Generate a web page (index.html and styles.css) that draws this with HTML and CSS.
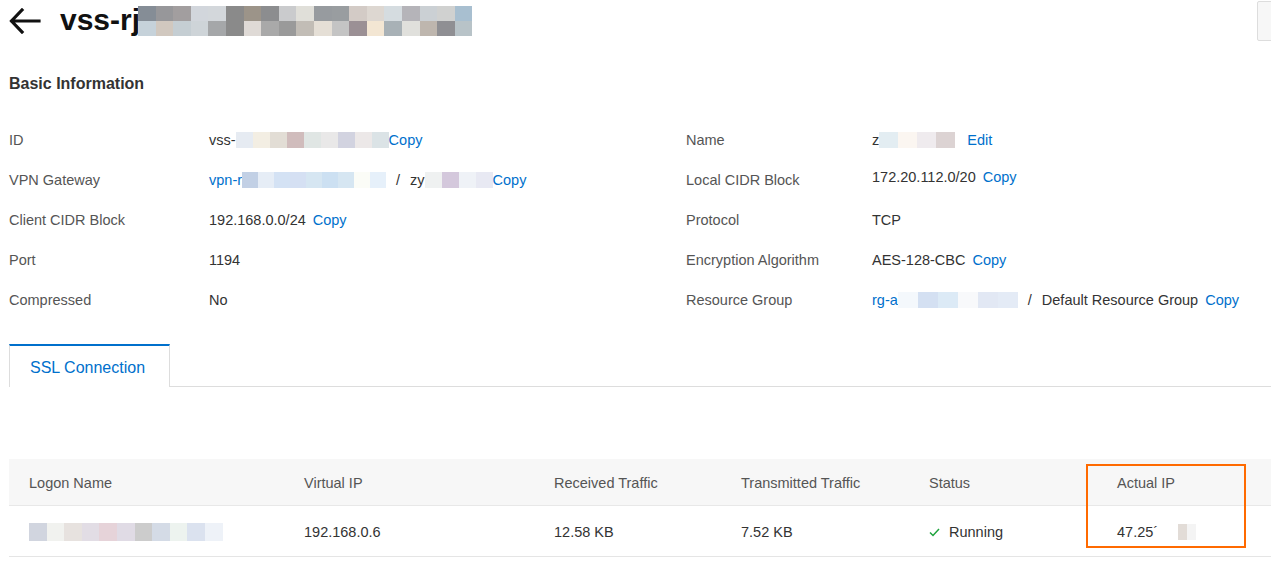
FILE: index.html
```html
<!DOCTYPE html>
<html>
<head>
<meta charset="utf-8">
<link rel="stylesheet" href="styles.css">
</head>
<body>
<div class="page">
  <header class="top">
    <svg class="back" width="32" height="26" viewBox="0 0 32 26"><path d="M30 13H3M13 2L2.5 13 13 24" fill="none" stroke="#111" stroke-width="3.2" stroke-linecap="square"/></svg>
    <h1 class="title">vss-rj</h1>
    <div class="pix2">
      <div class="prow">
        <i style="background:#858d96"></i><i style="background:#97979a"></i><i style="background:#a29e9f"></i><i style="background:#d2d6dc"></i><i style="background:#d3d7db"></i><i style="background:#8a8a8a"></i><i style="background:#9c9489"></i><i style="background:#8c8d8f"></i><i style="background:#cacbcd"></i><i style="background:#e0dfd9"></i><i style="background:#979b9f"></i><i style="background:#999da0"></i><i style="background:#d3cbc6"></i><i style="background:#ddd7d1"></i><i style="background:#d5dce0"></i><i style="background:#b5b4b9"></i><i style="background:#cbd0d4"></i><i style="background:#d0d1d0"></i><i style="background:#a8bfd0"></i>
      </div>
      <div class="prow">
        <i style="background:#c6d2da"></i><i style="background:#d1c8bf"></i><i style="background:#c5ced3"></i><i style="background:#ced4d8"></i><i style="background:#a5a7a9"></i><i style="background:#8a8a8a"></i><i style="background:#dfdad6"></i><i style="background:#a9a9a9"></i><i style="background:#9a9a9a"></i><i style="background:#c2bdb6"></i><i style="background:#e5dfd6"></i><i style="background:#c4c4c4"></i><i style="background:#9b9095"></i><i style="background:#f3e6d3"></i><i style="background:#a8b1b6"></i><i style="background:#e0e0dc"></i><i style="background:#beb6ae"></i><i style="background:#8f8f93"></i><i style="background:#b8c3c8"></i>
      </div>
    </div>
    <div class="corner"></div>
  </header>

  <h2 class="section">Basic Information</h2>

  <div class="info">
    <div class="col left">
      <div class="row"><span class="lbl">ID</span><span class="val">vss-<span class="blk"><i style="background:#e6ebf2"></i><i style="background:#f3eee3"></i><i style="background:#e2ddd5"></i><i style="background:#d0bcbc"></i><i style="background:#e0e6e4"></i><i style="background:#e9e8e8"></i><i style="background:#d2d3e0"></i><i style="background:#ece8e8"></i><i style="background:#dbe3e6"></i></span><a>Copy</a></span></div>
      <div class="row"><span class="lbl">VPN Gateway</span><span class="val"><a class="plain">vpn-r</a><span class="blk vpn"><i style="background:#c2d0e5"></i><i style="background:#e6edf6"></i><i style="background:#d4e2f4"></i><i style="background:#d5e0f3"></i><i style="background:#d6e6f2"></i><i style="background:#cce0f2"></i><i style="background:#d6e6f2"></i><i style="background:#fbfcf7"></i><i style="background:#e6f0fa"></i></span><span class="sep">/</span>zy<span class="blk"><i style="background:#eff1f1"></i><i style="background:#d4c8dc"></i><i style="background:#eff2f7"></i><i style="background:#e8e9f3"></i></span><a>Copy</a></span></div>
      <div class="row"><span class="lbl">Client CIDR Block</span><span class="val">192.168.0.0/24<a class="gap">Copy</a></span></div>
      <div class="row"><span class="lbl">Port</span><span class="val">1194</span></div>
      <div class="row"><span class="lbl">Compressed</span><span class="val">No</span></div>
    </div>
    <div class="col right">
      <div class="row"><span class="lbl r">Name</span><span class="val">z<span class="blk name"><i style="background:#e3edf2"></i><i style="background:#fbf6f1"></i><i style="background:#efebee"></i><i style="background:#dcd3d3"></i></span><a class="gap2">Edit</a></span></div>
      <div class="row"><span class="lbl r">Local CIDR Block</span><span class="val up">172.20.112.0/20<a class="gap">Copy</a></span></div>
      <div class="row"><span class="lbl r">Protocol</span><span class="val">TCP</span></div>
      <div class="row"><span class="lbl r">Encryption Algorithm</span><span class="val">AES-128-CBC<a class="gap">Copy</a></span></div>
      <div class="row"><span class="lbl r">Resource Group</span><span class="val"><a class="plain">rg-a</a><span class="blk rg"><i style="background:#f4f8fc"></i><i style="background:#d4e0f2"></i><i style="background:#dceaf6"></i><i style="background:#f8f9fb"></i><i style="background:#e2e8f4"></i><i style="background:#e4ebf6"></i></span><span class="sep">/</span>Default Resource Group<a class="gap">Copy</a></span></div>
    </div>
  </div>

  <div class="tabs">
    <div class="tab active">SSL Connection</div>
    <div class="tabline"></div>
  </div>

  <div class="table">
    <div class="tr head">
      <div class="c c1">Logon Name</div>
      <div class="c c2">Virtual IP</div>
      <div class="c c3">Received Traffic</div>
      <div class="c c4">Transmitted Traffic</div>
      <div class="c c5">Status</div>
      <div class="c c6">Actual IP</div>
    </div>
    <div class="tr body">
      <div class="c c1"><span class="blk big"><i style="background:#d1d5df"></i><i style="background:#f1f2ef"></i><i style="background:#e7e2df"></i><i style="background:#e2dde5"></i><i style="background:#e6d3d9"></i><i style="background:#e0dbe5"></i><i style="background:#cccccc"></i><i style="background:#d4dbe6"></i><i style="background:#edf3ef"></i><i style="background:#dbe2ef"></i><i style="background:#eef2f8"></i></span></div>
      <div class="c c2">192.168.0.6</div>
      <div class="c c3">12.58 KB</div>
      <div class="c c4">7.52 KB</div>
      <div class="c c5"><svg class="check" width="11" height="9" viewBox="0 0 11 9"><path d="M1 4.5L4 7.5 10 1" fill="none" stroke="#1fa33d" stroke-width="1.5"/></svg>Running</div>
      <div class="c c6">47.25´<span class="blk ip"><i style="background:#fff"></i><i style="background:#fff"></i><i style="background:#e2dcd7"></i><i style="background:#f4f4f4"></i></span></div>
    </div>
    <div class="highlight"></div>
  </div>
</div>
</body>
</html>
```
FILE: styles.css
```css
* { box-sizing: border-box; }
html, body { margin: 0; padding: 0; background: #fff; }
body {
  font-family: "Liberation Sans", Arial, sans-serif;
  font-size: 14.5px;
  color: #333;
  overflow: hidden;
}
.page { width: 1271px; height: 561px; position: relative; overflow: hidden; }
.top {
  height: 44px;
  display: flex;
  align-items: center;
  padding-left: 9px;
  position: relative;
}
.back { margin-top: -2px; }
.title {
  margin: 0 0 0 19px;
  font-size: 30px;
  font-weight: bold;
  color: #111;
  line-height: 1;
  margin-top: -4px;
}
.pix2 { display: flex; flex-direction: column; margin-left: -2px; margin-top: -2px; }
.prow { display: flex; }
.prow i { display: block; width: 17.6px; height: 15px; }
.corner {
  position: absolute;
  right: -4px;
  top: 1px;
  width: 18px;
  height: 40px;
  border: 1px solid #ddd;
  border-radius: 2px;
  background: #f7f7f7;
}
.section {
  margin: 30px 0 0 9px;
  font-size: 16px;
  font-weight: bold;
  color: #333;
  line-height: 20px;
  height: 20px;
}
.info {
  display: flex;
  padding-left: 9px;
  margin-top: 26px;
}
.col { display: flex; flex-direction: column; }
.col.left { width: 677px; }
.row { height: 40px; display: flex; align-items: center; }
.lbl { width: 200px; color: #555; }
.lbl.r { width: 186px; }
.val { display: flex; align-items: center; color: #333; }
.val.up { margin-top: -6px; }
a { color: #0070cc; text-decoration: none; }
a.gap { margin-left: 7px; }
a.gap2 { margin-left: 12px; }
.sep { margin: 0 10px; }
.blk { display: inline-flex; height: 16px; }
.blk i { display: block; width: 17px; height: 16px; }
.blk.vpn i { width: 16px; }
.blk.rg i { width: 20px; }
.blk.name i { width: 19px; }
.blk.big { height: 18px; }
.blk.big i { width: 17.6px; height: 18px; }
.blk.ip { margin-left: 2px; }
.blk.ip i { width: 9px; }
.tabs {
  display: flex;
  margin-top: 24px;
  padding-left: 9px;
  height: 43px;
}
.tab {
  width: 161px;
  height: 43px;
  border: 1px solid #ddd;
  border-top: 2px solid #0070cc;
  border-bottom: none;
  color: #0070cc;
  font-size: 16px;
  padding-left: 20px;
  line-height: 44px;
}
.tabline { flex: 1; border-bottom: 1px solid #ddd; }
.table {
  margin-top: 72px;
  margin-left: 9px;
  position: relative;
}
.tr { display: flex; align-items: center; }
.tr.head { height: 47px; background: #f7f7f7; border-bottom: 1px solid #e8e8e8; color: #555; padding-top: 2px; }
.tr.body { height: 51px; border-bottom: 1px solid #e5e5e5; padding-top: 2px; }
.c { padding-left: 20px; display: flex; align-items: center; }
.c1 { width: 275px; }
.c2 { width: 250px; }
.c3 { width: 187px; }
.c4 { width: 188px; }
.c5 { width: 188px; }
.c6 { flex: 1; }
.check { margin-right: 9px; }
.highlight {
  position: absolute;
  left: 1077px;
  top: 5px;
  width: 160px;
  height: 84px;
  border: 2px solid #ff6a00;
}
```
